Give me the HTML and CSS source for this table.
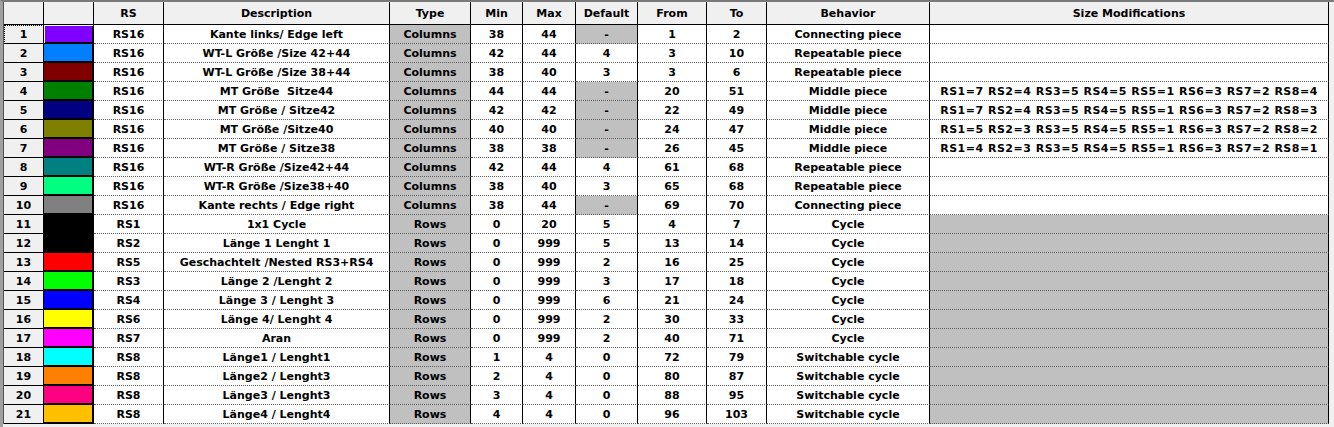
FILE: index.html
```html
<!DOCTYPE html>
<html>
<head>
<meta charset="utf-8">
<link rel="stylesheet" href="styles.css">
</head>
<body>
<div class="frame">
  <div class="sheet">
    <div class="row head">
      <div class="c rn"></div><div class="c"></div><div class="c">RS</div><div class="c">Description</div><div class="c">Type</div><div class="c">Min</div><div class="c">Max</div><div class="c">Default</div><div class="c">From</div><div class="c">To</div><div class="c">Behavior</div><div class="c">Size Modifications</div>
    </div>
    <div class="row"><div class="c rn focus">1</div><div class="c sw first"><span style="background:#8000ff"></span></div><div class="c">RS16</div><div class="c">Kante links/ Edge left</div><div class="c g">Columns</div><div class="c">38</div><div class="c">44</div><div class="c g">-</div><div class="c">1</div><div class="c">2</div><div class="c">Connecting piece</div><div class="c mods"></div></div>
    <div class="row"><div class="c rn">2</div><div class="c sw"><span style="background:#0080ff"></span></div><div class="c">RS16</div><div class="c">WT-L Größe /Size 42+44</div><div class="c g">Columns</div><div class="c">42</div><div class="c">44</div><div class="c">4</div><div class="c">3</div><div class="c">10</div><div class="c">Repeatable piece</div><div class="c mods"></div></div>
    <div class="row"><div class="c rn">3</div><div class="c sw"><span style="background:#800000"></span></div><div class="c">RS16</div><div class="c">WT-L Größe /Size 38+44</div><div class="c g">Columns</div><div class="c">38</div><div class="c">40</div><div class="c">3</div><div class="c">3</div><div class="c">6</div><div class="c">Repeatable piece</div><div class="c mods"></div></div>
    <div class="row"><div class="c rn">4</div><div class="c sw"><span style="background:#008000"></span></div><div class="c">RS16</div><div class="c">MT Größe &nbsp;Sitze44</div><div class="c g">Columns</div><div class="c">44</div><div class="c">44</div><div class="c g">-</div><div class="c">20</div><div class="c">51</div><div class="c">Middle piece</div><div class="c mods">RS1=7 RS2=4 RS3=5 RS4=5 RS5=1 RS6=3 RS7=2 RS8=4</div></div>
    <div class="row"><div class="c rn">5</div><div class="c sw"><span style="background:#000080"></span></div><div class="c">RS16</div><div class="c">MT Größe / Sitze42</div><div class="c g">Columns</div><div class="c">42</div><div class="c">42</div><div class="c g">-</div><div class="c">22</div><div class="c">49</div><div class="c">Middle piece</div><div class="c mods">RS1=7 RS2=4 RS3=5 RS4=5 RS5=1 RS6=3 RS7=2 RS8=3</div></div>
    <div class="row"><div class="c rn">6</div><div class="c sw"><span style="background:#808000"></span></div><div class="c">RS16</div><div class="c">MT Größe /Sitze40</div><div class="c g">Columns</div><div class="c">40</div><div class="c">40</div><div class="c g">-</div><div class="c">24</div><div class="c">47</div><div class="c">Middle piece</div><div class="c mods">RS1=5 RS2=3 RS3=5 RS4=5 RS5=1 RS6=3 RS7=2 RS8=2</div></div>
    <div class="row"><div class="c rn">7</div><div class="c sw"><span style="background:#800080"></span></div><div class="c">RS16</div><div class="c">MT Größe / Sitze38</div><div class="c g">Columns</div><div class="c">38</div><div class="c">38</div><div class="c g">-</div><div class="c">26</div><div class="c">45</div><div class="c">Middle piece</div><div class="c mods">RS1=4 RS2=3 RS3=5 RS4=5 RS5=1 RS6=3 RS7=2 RS8=1</div></div>
    <div class="row"><div class="c rn">8</div><div class="c sw"><span style="background:#008080"></span></div><div class="c">RS16</div><div class="c">WT-R Größe /Size42+44</div><div class="c g">Columns</div><div class="c">42</div><div class="c">44</div><div class="c">4</div><div class="c">61</div><div class="c">68</div><div class="c">Repeatable piece</div><div class="c mods"></div></div>
    <div class="row"><div class="c rn">9</div><div class="c sw"><span style="background:#00ff80"></span></div><div class="c">RS16</div><div class="c">WT-R Größe /Size38+40</div><div class="c g">Columns</div><div class="c">38</div><div class="c">40</div><div class="c">3</div><div class="c">65</div><div class="c">68</div><div class="c">Repeatable piece</div><div class="c mods"></div></div>
    <div class="row"><div class="c rn">10</div><div class="c sw"><span style="background:#808080"></span></div><div class="c">RS16</div><div class="c">Kante rechts / Edge right</div><div class="c g">Columns</div><div class="c">38</div><div class="c">44</div><div class="c g">-</div><div class="c">69</div><div class="c">70</div><div class="c">Connecting piece</div><div class="c mods"></div></div>
    <div class="row"><div class="c rn">11</div><div class="c sw"><span style="background:#000000"></span></div><div class="c">RS1</div><div class="c">1x1 Cycle</div><div class="c g">Rows</div><div class="c">0</div><div class="c">20</div><div class="c">5</div><div class="c">4</div><div class="c">7</div><div class="c">Cycle</div><div class="c g"></div></div>
    <div class="row"><div class="c rn">12</div><div class="c sw"><span style="background:#000000"></span></div><div class="c">RS2</div><div class="c">Länge 1 Lenght 1</div><div class="c g">Rows</div><div class="c">0</div><div class="c">999</div><div class="c">5</div><div class="c">13</div><div class="c">14</div><div class="c">Cycle</div><div class="c g"></div></div>
    <div class="row"><div class="c rn">13</div><div class="c sw"><span style="background:#ff0000"></span></div><div class="c">RS5</div><div class="c">Geschachtelt /Nested RS3+RS4</div><div class="c g">Rows</div><div class="c">0</div><div class="c">999</div><div class="c">2</div><div class="c">16</div><div class="c">25</div><div class="c">Cycle</div><div class="c g"></div></div>
    <div class="row"><div class="c rn">14</div><div class="c sw"><span style="background:#00ff00"></span></div><div class="c">RS3</div><div class="c">Länge 2 /Lenght 2</div><div class="c g">Rows</div><div class="c">0</div><div class="c">999</div><div class="c">3</div><div class="c">17</div><div class="c">18</div><div class="c">Cycle</div><div class="c g"></div></div>
    <div class="row"><div class="c rn">15</div><div class="c sw"><span style="background:#0000ff"></span></div><div class="c">RS4</div><div class="c">Länge 3 / Lenght 3</div><div class="c g">Rows</div><div class="c">0</div><div class="c">999</div><div class="c">6</div><div class="c">21</div><div class="c">24</div><div class="c">Cycle</div><div class="c g"></div></div>
    <div class="row"><div class="c rn">16</div><div class="c sw"><span style="background:#ffff00"></span></div><div class="c">RS6</div><div class="c">Länge 4/ Lenght 4</div><div class="c g">Rows</div><div class="c">0</div><div class="c">999</div><div class="c">2</div><div class="c">30</div><div class="c">33</div><div class="c">Cycle</div><div class="c g"></div></div>
    <div class="row"><div class="c rn">17</div><div class="c sw"><span style="background:#ff00ff"></span></div><div class="c">RS7</div><div class="c">Aran</div><div class="c g">Rows</div><div class="c">0</div><div class="c">999</div><div class="c">2</div><div class="c">40</div><div class="c">71</div><div class="c">Cycle</div><div class="c g"></div></div>
    <div class="row"><div class="c rn">18</div><div class="c sw"><span style="background:#00ffff"></span></div><div class="c">RS8</div><div class="c">Länge1 / Lenght1</div><div class="c g">Rows</div><div class="c">1</div><div class="c">4</div><div class="c">0</div><div class="c">72</div><div class="c">79</div><div class="c">Switchable cycle</div><div class="c g"></div></div>
    <div class="row"><div class="c rn">19</div><div class="c sw"><span style="background:#ff8000"></span></div><div class="c">RS8</div><div class="c">Länge2 / Lenght3</div><div class="c g">Rows</div><div class="c">2</div><div class="c">4</div><div class="c">0</div><div class="c">80</div><div class="c">87</div><div class="c">Switchable cycle</div><div class="c g"></div></div>
    <div class="row"><div class="c rn">20</div><div class="c sw"><span style="background:#ff0080"></span></div><div class="c">RS8</div><div class="c">Länge3 / Lenght3</div><div class="c g">Rows</div><div class="c">3</div><div class="c">4</div><div class="c">0</div><div class="c">88</div><div class="c">95</div><div class="c">Switchable cycle</div><div class="c g"></div></div>
    <div class="row"><div class="c rn">21</div><div class="c sw"><span style="background:#ffc000"></span></div><div class="c">RS8</div><div class="c">Länge4 / Lenght4</div><div class="c g">Rows</div><div class="c">4</div><div class="c">4</div><div class="c">0</div><div class="c">96</div><div class="c">103</div><div class="c">Switchable cycle</div><div class="c g"></div></div>
  </div>
</div>
</body>
</html>
```

FILE: styles.css
```css
html, body {
  margin: 0;
  padding: 0;
  background: #f0f0f0;
}
body {
  width: 1334px;
  height: 427px;
  overflow: hidden;
  font-family: "DejaVu Sans", "Liberation Sans", sans-serif;
  font-weight: bold;
  font-size: 11px;
  color: #000;
}
.frame {
  height: 427px;
  box-sizing: border-box;
  border-top: 2px solid #7a7a7a;
  border-left: 3px solid #a0a0a0;
  background: #f0f0f0;
}
.sheet {
  border-left: 1px solid #555;
  display: flex;
  flex-direction: column;
  width: 1325px;
}
.row {
  display: grid;
  grid-template-columns: 40px 50px 70px 226px 81px 52px 53px 62px 69px 60px 163px 399px;
  height: 19px;
}
.row.head {
  height: 23px;
}
.c {
  box-sizing: border-box;
  border-right: 1px solid #000;
  border-bottom: 1px dotted #606060;
  background: #fff;
  display: flex;
  align-items: center;
  justify-content: center;
  white-space: nowrap;
  overflow: hidden;
  line-height: 1;
}
.head .c {
  background: #f0f0f0;
  border-bottom: 1px solid #000;
}
.c.rn {
  background: #f0f0f0;
  border-bottom: 1px solid #000;
}
.c.focus {
  outline: 1px dotted #000;
  outline-offset: -1px;
}
.c.g {
  background: #c0c0c0;
}
.c.mods {
  letter-spacing: 0.5px;
}
.c.sw {
  border-bottom: 1px solid #000;
  align-items: stretch;
  justify-content: stretch;
}
.c.sw.first {
  padding: 1px 0 0 1px;
}
.c.sw span {
  flex: 1;
  border-right: 1px solid #000;
  border-bottom: 1px solid #000;
}
```
